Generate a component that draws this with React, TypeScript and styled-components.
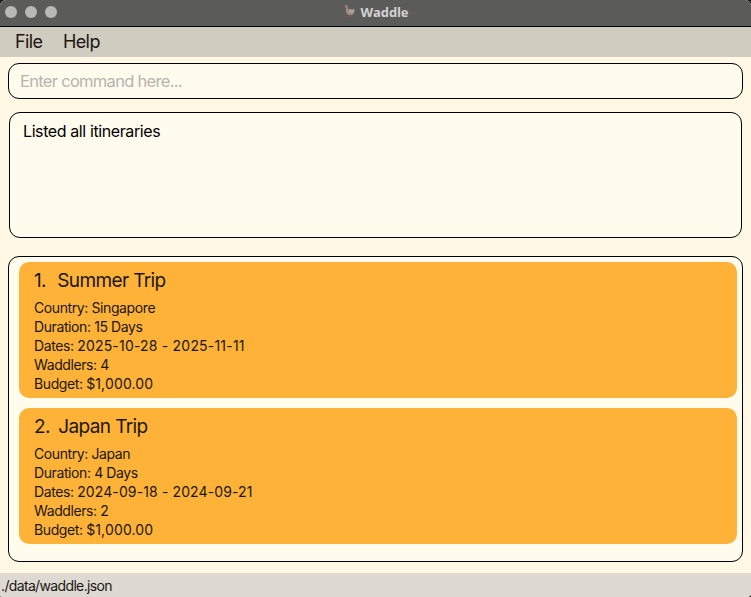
import React from "react";
import styled, { createGlobalStyle } from "styled-components";

const GlobalStyle = createGlobalStyle`
  * { box-sizing: border-box; }
  html, body { margin: 0; padding: 0; background: #1c1c1c; overflow: hidden; }
  body { font-family: Inter, "Liberation Sans", sans-serif; color: #1a1712; }
`;

const Window = styled.div`
  display: flex;
  flex-direction: column;
  width: 751px;
  height: 597px;
  overflow: hidden;
  border-radius: 6px 6px 4px 2px;
  background: #fff8e5;
`;

const TitleBar = styled.header`
  display: grid;
  grid-template-columns: 1fr auto 1fr;
  align-items: center;
  flex: none;
  height: 27px;
  padding: 0 5px 2px;
  background: #5b5b59;
  border-bottom: 1px solid #000;
`;

const Lights = styled.div`
  display: flex;
  gap: 8px;
`;

const Light = styled.span`
  width: 12px;
  height: 12px;
  border-radius: 50%;
  background: #b8b8b7;
`;

const Title = styled.div`
  display: flex;
  align-items: center;
  gap: 5px;
  margin-top: -1px;
  color: #d2d2d1;
  font: 700 13px/16px "Open Sans", Inter, sans-serif;
  letter-spacing: -0.1px;
`;

const GooseIcon = styled.svg`
  display: block;
  width: 13px;
  height: 16px;
  margin-top: -2px;
`;

const MenuBar = styled.nav`
  display: flex;
  flex: none;
  height: 30px;
  padding-left: 15px;
  gap: 20.5px;
  background: #d1ccc0;
`;

const MenuItem = styled.span`
  font-size: 18px;
  line-height: 30px;
  letter-spacing: -0.6px;
`;

const Content = styled.main`
  display: flex;
  flex: 1;
  flex-direction: column;
  padding: 6px 8px 11px;
`;

const CommandInput = styled.input`
  display: block;
  flex: none;
  width: 100%;
  height: 36px;
  padding: 0 11px;
  border: 1px solid #000;
  border-radius: 11px;
  outline: none;
  background: #fffcee;
  color: #111;
  font-family: Inter, sans-serif;
  font-size: 16.5px;
  letter-spacing: -0.7px;
  &::placeholder { color: #b5b4b0; opacity: 1; }
`;

const ResultPanel = styled.section`
  flex: none;
  height: 126px;
  margin: 13px 1px 18px;
  padding: 8px 13px;
  border: 1px solid #000;
  border-radius: 11px;
  background: #fffcee;
  color: #000;
  font-size: 16px;
  line-height: 20px;
  letter-spacing: -0.4px;
`;

const ListPanel = styled.section`
  display: flex;
  flex: 1;
  flex-direction: column;
  gap: 10px;
  padding: 5px 5px 0 10px;
  border: 1px solid #000;
  border-radius: 11px;
  background: #fffcee;
`;

const Card = styled.article`
  flex: none;
  height: 136px;
  padding: 6px 15px;
  border-radius: 10px;
  background: #ffb238;
`;

const CardTitle = styled.h2<{ $gap: number }>`
  display: flex;
  gap: ${(p) => p.$gap}px;
  height: 26px;
  margin: 0 0 4px;
  font-size: 19px;
  font-weight: 400;
  line-height: 26px;
  letter-spacing: -0.62px;
`;

const Detail = styled.p`
  margin: 0;
  font-size: 14px;
  line-height: 19px;
  letter-spacing: -0.4px;
`;

const Figures = styled.span<{ $tracking: number }>`
  letter-spacing: ${(p) => p.$tracking}px;
`;

const StatusBar = styled.footer`
  flex: none;
  height: 24px;
  padding-left: 1px;
  background: #dedad2;
  font-size: 14px;
  line-height: 26px;
  letter-spacing: -0.65px;
`;

const itineraries = [
  { name: "Summer Trip", country: "Singapore", days: 15, dates: "2025-10-28 - 2025-11-11", waddlers: 4, budget: "$1,000.00", titleGap: 11.3, dateTracking: 0.2 },
  { name: "Japan Trip", country: "Japan", days: 4, dates: "2024-09-18 - 2024-09-21", waddlers: 2, budget: "$1,000.00", titleGap: 8.5, dateTracking: 0.12 },
];

function Goose() {
  return (
    <GooseIcon viewBox="0 0 13 16">
      <path d="M6.3 12 5.8 13.8H4M8.2 12 8.4 13.5H7" fill="none" stroke="#8b5546" strokeWidth="1" />
      <path d="M1.3 3.3Q2 1.6 3.5 2Q5 2.4 4.8 4.4L4.7 6.4Q6.5 5.2 8.8 6.3L11.4 6Q12.1 10.6 9.2 11.8Q5.7 13.1 3.5 10.5C2.2 8.8 3 6.8 3 4.8Z" fill="#9a8c80" />
      <path d="M5.6 7.6Q8.5 6.6 11.4 6.8Q10.5 10.5 7.4 10Q5.7 9.2 5.6 7.6Z" fill="#ada197" />
      <path d="M2 3 .1 4.1 2.4 4.5Z" fill="#875446" />
      <circle cx="2.9" cy="3.2" r=".4" fill="#41403d" />
    </GooseIcon>
  );
}

export default function App() {
  return (
    <>
      <GlobalStyle />
      <Window>
        <TitleBar>
          <Lights><Light /><Light /><Light /></Lights>
          <Title><Goose />Waddle</Title>
        </TitleBar>
        <MenuBar>
          <MenuItem>File</MenuItem>
          <MenuItem>Help</MenuItem>
        </MenuBar>
        <Content>
          <CommandInput placeholder="Enter command here..." />
          <ResultPanel>Listed all itineraries</ResultPanel>
          <ListPanel>
            {itineraries.map((trip, i) => (
              <Card key={trip.name}>
                <CardTitle $gap={trip.titleGap}><span>{i + 1}.</span><span>{trip.name}</span></CardTitle>
                <Detail>Country: {trip.country}</Detail>
                <Detail>Duration: {trip.days} Days</Detail>
                <Detail>Dates: <Figures $tracking={trip.dateTracking}>{trip.dates}</Figures></Detail>
                <Detail>Waddlers: {trip.waddlers}</Detail>
                <Detail>Budget: <Figures $tracking={0.15}>{trip.budget}</Figures></Detail>
              </Card>
            ))}
          </ListPanel>
        </Content>
        <StatusBar>./data/waddle.json</StatusBar>
      </Window>
    </>
  );
}
